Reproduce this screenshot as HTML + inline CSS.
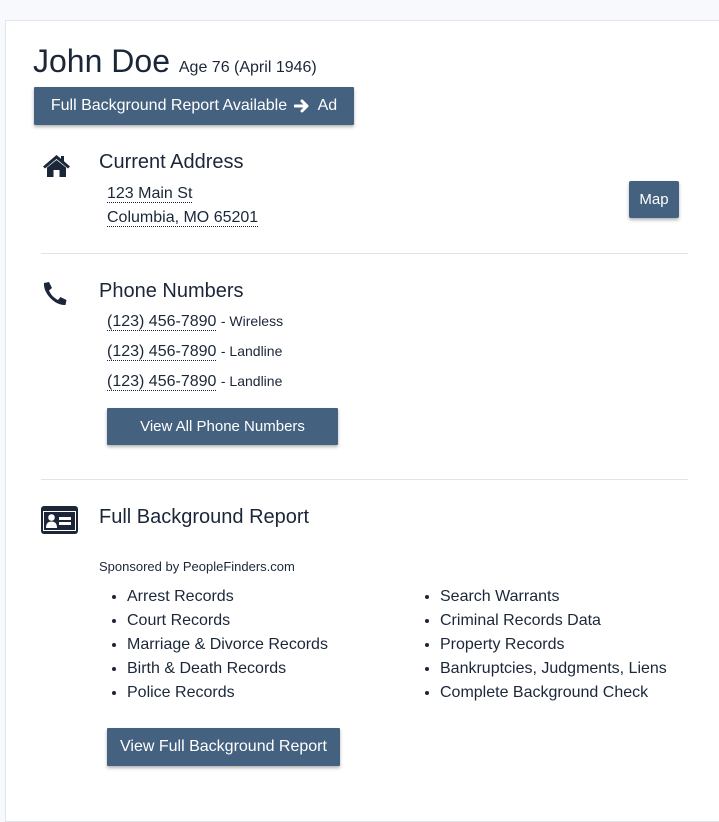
<!DOCTYPE html>
<html><head><style>
body{margin:0;width:719px;height:783px;background:#f8f9fc;font-family:"Liberation Sans",sans-serif;color:#1b2738;overflow:hidden;position:relative}
.card{position:absolute;left:5px;top:20px;width:730px;height:800px;background:#fff;border:1px solid #e1e4e8}
.a{position:absolute;white-space:nowrap}
.btn{position:absolute;background:#44617f;color:#fff;font-size:15px;display:flex;align-items:center;justify-content:center;box-shadow:0 2px 3px rgba(0,0,0,.3);border-radius:1px}
.u{border-bottom:1px dotted #1b2738}
hr{position:absolute;margin:0;border:0;border-top:1px solid #e3e3e3;height:0}
ul{position:absolute;margin:0;padding:0 0 0 20px;font-size:16px;line-height:24px}
.ph{position:absolute;left:107px;font-size:16px;line-height:20px;white-space:nowrap}
.ph small{font-size:14px}
</style></head><body>
<div class="card"></div>
<div class="a" style="left:33px;top:42px;font-size:32px;line-height:38px">John Doe <span style="font-size:16px">Age 76 (April 1946)</span></div>
<div class="btn" style="left:34px;top:87px;width:320px;height:38px;font-size:16px">Full Background Report Available&nbsp;
<svg width="16" height="14" viewBox="0 0 16 14" style="margin:0 8px 0 2px"><path d="M1 7H13M8 2L13 7L8 12" stroke="#fff" stroke-width="3" fill="none" stroke-linecap="round" stroke-linejoin="round"/></svg>Ad</div>

<svg class="a" style="left:42px;top:154px" width="29" height="23" viewBox="0 0 29 23"><path d="M14.5 1L1 12.5L3 14.5L14.5 5L26 14.5L28 12.5L22 7.3V2H19V4.8Z" fill="#1b2738"/><path d="M5 13.5L14.5 6L24 13.5V23H17.5V16H11.5V23H5Z" fill="#1b2738"/></svg>
<div class="a" style="left:99px;top:150px;font-size:20px;line-height:24px">Current Address</div>
<div class="a" style="left:107px;top:182px;font-size:16px;line-height:24px"><span class="u">123 Main St</span><br><span class="u">Columbia, MO 65201</span></div>
<div class="btn" style="left:629px;top:181px;width:50px;height:37px;border-radius:2px">Map</div>
<hr style="left:41px;top:253px;width:647px">

<svg class="a" style="left:41px;top:281px" width="27" height="25" viewBox="0 0 27 25"><path d="M3 2L8 1L11 7L8 9.5C10 14 13 17 17 19L19.5 16L25.5 19L24.5 24C15 25 2 13 3 2Z" fill="#1b2738"/></svg>
<div class="a" style="left:99px;top:279px;font-size:20px;line-height:24px">Phone Numbers</div>
<div class="ph" style="top:311px"><span class="u">(123) 456-7890</span> <small>- Wireless</small></div>
<div class="ph" style="top:341px"><span class="u">(123) 456-7890</span> <small>- Landline</small></div>
<div class="ph" style="top:371px"><span class="u">(123) 456-7890</span> <small>- Landline</small></div>
<div class="btn" style="left:107px;top:408px;width:231px;height:37px">View All Phone Numbers</div>
<hr style="left:41px;top:479px;width:647px">

<svg class="a" style="left:41px;top:506px" width="37" height="28" viewBox="0 0 37 28"><rect x="0" y="0" width="37" height="28" rx="3" fill="#1b2738"/><rect x="2" y="5" width="33" height="20" fill="#fff"/><rect x="3" y="6" width="31" height="18" fill="#1b2738"/><circle cx="10.5" cy="11.5" r="3.3" fill="#fff"/><path d="M5 22C5 17 7.5 15.5 10.5 15.5S16 17 16 22Z" fill="#fff"/><rect x="18" y="11" width="12" height="3" fill="#fff"/><rect x="18" y="16" width="12" height="3" fill="#fff"/></svg>
<div class="a" style="left:99px;top:505px;font-size:20px;line-height:24px">Full Background Report</div>
<div class="a" style="left:99px;top:559px;font-size:13px;line-height:16px">Sponsored by PeopleFinders.com</div>
<ul style="left:107px;top:585px"><li>Arrest Records</li><li>Court Records</li><li>Marriage &amp; Divorce Records</li><li>Birth &amp; Death Records</li><li>Police Records</li></ul>
<ul style="left:420px;top:585px"><li>Search Warrants</li><li>Criminal Records Data</li><li>Property Records</li><li>Bankruptcies, Judgments, Liens</li><li>Complete Background Check</li></ul>
<div class="btn" style="left:107px;top:728px;width:233px;height:38px;font-size:16px">View Full Background Report</div>
</body></html>
